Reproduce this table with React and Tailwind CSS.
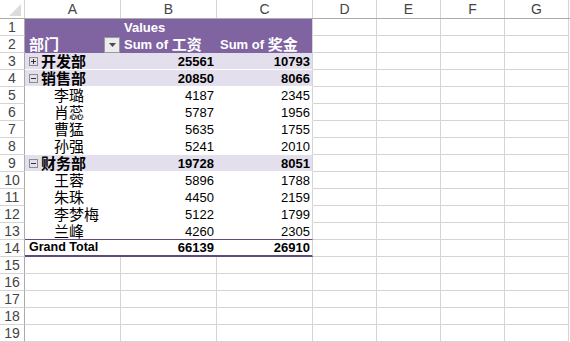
import React from "react";

const FONT = "font-[family-name:'Liberation_Sans','Noto_Sans_CJK_SC',sans-serif]";

function Cjk({ children }) {
  return <span className="text-[15px] leading-none">{children}</span>;
}

function Box({ minus }) {
  return (
    <svg width="9" height="9" viewBox="0 0 9 9" className="shrink-0">
      <rect x="0.5" y="0.5" width="8" height="8" fill="none" stroke="#8c8c8c" />
      <line x1="2" y1="4.5" x2="7" y2="4.5" stroke="#333" />
      {!minus && <line x1="4.5" y1="2" x2="4.5" y2="7" stroke="#333" />}
    </svg>
  );
}

const colW = ["w-[96px]", "w-[96px]", "w-[96px]", "w-[64px]", "w-[64px]", "w-[64px]", "w-[64px]"];
const letters = ["A", "B", "C", "D", "E", "F", "G"];

function EmptyCell({ w }) {
  return <div className={`${w} h-full border-r border-b border-[#d4d4d4]`} />;
}

function Num({ children, bold, last }) {
  return (
    <div
      className={`${last ? "w-[95px] pr-[2px]" : "w-[96px] pr-[3px]"} h-full flex items-center justify-end pt-[1px] text-[13px] ${bold ? "font-bold" : ""}`}
    >
      {children}
    </div>
  );
}

const depts = {
  3: { name: "开发部", b: "25561", c: "10793", minus: false },
  4: { name: "销售部", b: "20850", c: "8066", minus: true },
  9: { name: "财务部", b: "19728", c: "8051", minus: true },
};
const people = {
  5: ["李璐", "4187", "2345"],
  6: ["肖蕊", "5787", "1956"],
  7: ["曹猛", "5635", "1755"],
  8: ["孙强", "5241", "2010"],
  10: ["王蓉", "5896", "1788"],
  11: ["朱珠", "4450", "2159"],
  12: ["李梦梅", "5122", "1799"],
  13: ["兰峰", "4260", "2305"],
};

function Pivot({ n }) {
  if (n === 1) {
    return (
      <div className="w-[288px] h-full flex bg-[#8064a2] border-r border-r-[#d4d4d4] text-white font-bold">
        <div className="w-[96px]" />
        <div className="w-[96px] pl-[3px] pt-[1px] flex items-center text-[13px]">Values</div>
      </div>
    );
  }
  if (n === 2) {
    return (
      <div className="w-[288px] h-full flex bg-[#8064a2] border-r border-r-[#d4d4d4] text-white font-bold">
        <div className="w-[96px] pl-[4px] pr-[1px] flex items-center justify-between">
          <Cjk>部门</Cjk>
          <div className="w-[16px] h-[16px] bg-[#ececec] border border-[#9a9a9a] flex items-center justify-center">
            <svg width="7" height="4" viewBox="0 0 7 4">
              <polygon points="0,0 7,0 3.5,4" fill="#4a4a4a" />
            </svg>
          </div>
        </div>
        <div className="w-[96px] pl-[3px] flex items-center">
          <span className="text-[13px] whitespace-pre">Sum of </span>
          <Cjk>工资</Cjk>
        </div>
        <div className="w-[95px] pl-[3px] flex items-center">
          <span className="text-[13px] whitespace-pre">Sum of </span>
          <Cjk>奖金</Cjk>
        </div>
      </div>
    );
  }
  if (depts[n]) {
    const d = depts[n];
    return (
      <div className="w-[288px] h-full flex bg-[#e4dfec] border-r border-r-[#d4d4d4] border-b border-b-white font-bold">
        <div className="w-[96px] pl-[4px] flex items-center gap-[3px]">
          <Box minus={d.minus} />
          <Cjk>{d.name}</Cjk>
        </div>
        <Num bold>{d.b}</Num>
        <Num bold last>{d.c}</Num>
      </div>
    );
  }
  if (people[n]) {
    const p = people[n];
    return (
      <div
        className={`w-[288px] h-full flex bg-white border-r border-r-[#d4d4d4] border-b ${n === 13 ? "border-b-[#60497a]" : "border-b-white"}`}
      >
        <div className="w-[96px] pl-[29px] flex items-center">
          <Cjk>{p[0]}</Cjk>
        </div>
        <Num>{p[1]}</Num>
        <Num last>{p[2]}</Num>
      </div>
    );
  }
  return (
    <div className="w-[288px] h-full flex bg-white border-r border-r-[#d4d4d4] border-b-2 border-b-[#60497a] font-bold">
      <div className="w-[96px] pl-[4px] flex items-center text-[12.5px]">Grand Total</div>
      <Num bold>66139</Num>
      <Num bold last>26910</Num>
    </div>
  );
}

export default function App() {
  const rows = Array.from({ length: 19 }, (_, i) => i + 1);
  return (
    <div className={`w-[570px] h-[342px] bg-white overflow-hidden text-black ${FONT}`}>
      <div className="flex h-[19px] border-b border-[#ababab]">
        <div className="w-[25px] h-full border-r border-[#d4d4d4] flex items-end justify-end pr-[3px] pb-[2px]">
          <svg width="12" height="12" viewBox="0 0 12 12">
            <polygon points="12,0 12,12 0,12" fill="#dcdcdc" />
          </svg>
        </div>
        {letters.map((l, i) => (
          <div
            key={l}
            className={`${colW[i]} h-full border-r border-[#d4d4d4] flex items-center justify-center text-[14px] text-[#444]`}
          >
            {l}
          </div>
        ))}
      </div>
      {rows.map((n) => (
        <div key={n} className="flex h-[17px]">
          <div className="w-[25px] h-full border-r border-r-[#ababab] border-b border-b-[#d4d4d4] flex items-center justify-center pt-[1px] text-[14px] text-[#444]">
            {n}
          </div>
          {n <= 14 ? (
            <Pivot n={n} />
          ) : (
            <>
              <EmptyCell w={colW[0]} />
              <EmptyCell w={colW[1]} />
              <EmptyCell w={colW[2]} />
            </>
          )}
          {[3, 4, 5, 6].map((i) => (
            <EmptyCell key={i} w={colW[i]} />
          ))}
        </div>
      ))}
    </div>
  );
}
